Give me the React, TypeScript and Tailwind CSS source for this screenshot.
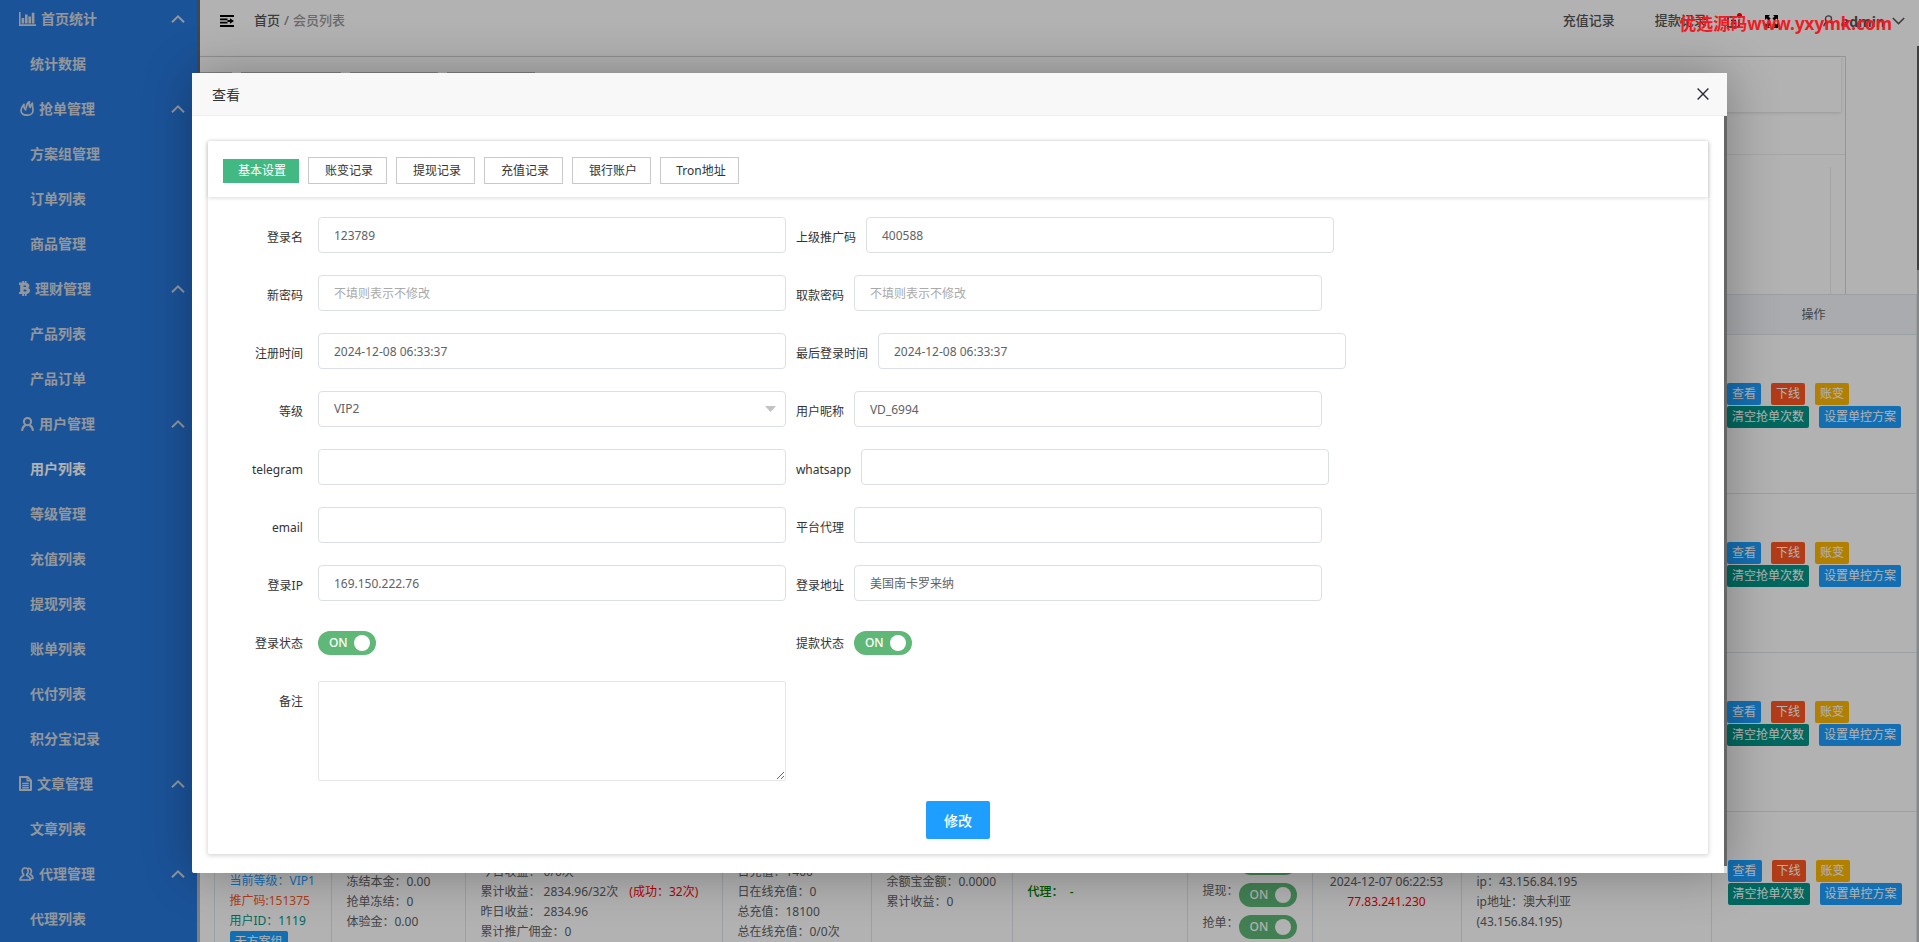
import React from 'react';

type IconName = 'chart' | 'fire' | 'coin' | 'user' | 'doc' | 'agent';
type MenuGroup = { title: string; icon: IconName; items: string[]; active?: string };

const MENU: MenuGroup[] = [
  { title: '首页统计', icon: 'chart', items: ['统计数据'] },
  { title: '抢单管理', icon: 'fire', items: ['方案组管理', '订单列表', '商品管理'] },
  { title: '理财管理', icon: 'coin', items: ['产品列表', '产品订单'] },
  {
    title: '用户管理',
    icon: 'user',
    items: ['用户列表', '等级管理', '充值列表', '提现列表', '账单列表', '代付列表', '积分宝记录'],
    active: '用户列表',
  },
  { title: '文章管理', icon: 'doc', items: ['文章列表'] },
  { title: '代理管理', icon: 'agent', items: ['代理列表'] },
];

function MenuIcon({ name }: { name: IconName }) {
  if (name === 'chart') {
    return (
      <svg className="mr-[5px] h-[14px] w-[17px]" viewBox="0 0 17 14" fill="currentColor" aria-hidden="true">
        <path d="M0 0h1.6v12.2H17V14H0z" />
        <path d="M2.600 6h2.600v5.400H2.600zM6 2.600h2.600v8.800H6zM9.400 4.600H12v6.800H9.400zM12.800 .8h2.600v10.600h-2.600z" />
      </svg>
    );
  }
  if (name === 'fire') {
    return (
      <svg className="mr-[5px] ml-px h-[15px] w-[14px]" viewBox="0 0 14 15" fill="none" stroke="currentColor" strokeWidth="1.700" strokeLinejoin="round" aria-hidden="true">
        <path d="M4 3.400C2.200 5.400 1 7.400 1 9.600c0 2.800 2.600 4.600 6 4.600s6-1.800 6-4.800c0-2.200-.8-4-.6-7.200-1.400 1-2 2.400-2.200 4.200C9.200 5.200 8.800 3 9.400.8 7.200 2 6.400 4 6.200 6.600c-.4.600-.6 1.400-.6 2.200C4.200 7.400 3.600 5.400 4 3.400z" />
      </svg>
    );
  }
  if (name === 'coin') {
    return (
      <svg className="mr-[5px] h-[15px] w-[11px]" viewBox="0 0 11 15" fill="currentColor" fillRule="evenodd" aria-hidden="true">
        <path d="M3.200 0h1.800v1.600h.8V0h1.800v1.900c1.600.3 2.800 1.200 2.800 2.800 0 1-.4 1.700-1.200 2.200 1.200.4 1.800 1.400 1.800 2.700 0 2.100-1.400 3.200-3.400 3.400V15H5.800v-1.900H5V15H3.200v-1.900H0v-2.200h1.200V4.100H0V1.600h3.200zM4.600 4.400v1.700h1.400c.7 0 1.100-.3 1.100-.9s-.4-.8-1.100-.8zm0 4v2h1.600c.9 0 1.300-.4 1.300-1s-.4-1-1.300-1z" />
      </svg>
    );
  }
  if (name === 'user') {
    return (
      <svg className="mr-[5px] ml-[2px] h-[14px] w-[13px]" viewBox="0 0 13 14" fill="none" stroke="currentColor" strokeWidth="2" aria-hidden="true">
        <circle cx="6.500" cy="4.600" r="3.600" />
        <path d="M4.600 8C2.600 9 1.300 10.800 1 13.800M8.400 8c2 1 3.300 2.800 3.600 5.800" />
      </svg>
    );
  }
  if (name === 'doc') {
    return (
      <svg className="mr-[5px] h-[15px] w-[13px]" viewBox="0 0 13 15" fill="none" stroke="currentColor" strokeWidth="2" aria-hidden="true">
        <path d="M1 1h7.600L12 4.400V14H1z" strokeLinejoin="round" />
        <path d="M8.200 1v3.800H12M3.200 7.500h6.600M3.200 9.600h6.600M3.200 11.700h6.600" strokeWidth="1.400" />
      </svg>
    );
  }
  return (
    <svg className="mr-[5px] h-[14px] w-[15px]" viewBox="0 0 15 14" fill="none" stroke="currentColor" strokeWidth="1.600" strokeLinejoin="round" aria-hidden="true">
      <path d="M6.200 1c-1.900 0-3 1.400-3 3.200 0 1.500.6 2.700 1.500 3.300v.9C3 9.200 1 10 1 13h10.400c0-3-2-3.800-3.700-4.600v-.9c.9-.6 1.500-1.800 1.500-3.300C9.200 2.400 8.100 1 6.200 1z" />
      <path d="M9 1.200c2 0 3.400 1.200 3.400 3 0 1.400-.6 2.400-1.400 3 1.800.8 3 2 3 4.300h-2.400" />
    </svg>
  );
}

function Sidebar() {
  return (
    <aside className="flex h-full w-[200px] shrink-0 overflow-hidden">
      <nav className="-mt-1 flex-1 bg-[#2878dc] text-[14px] font-bold text-[#d3d8e0]">
        {MENU.map((group) => (
          <div key={group.title}>
            <button type="button" className="flex h-[45px] w-full items-center pr-3 pl-[19px] text-left">
              <MenuIcon name={group.icon} />
              <span className="flex-1">{group.title}</span>
              <svg className="h-2 w-[14px]" viewBox="0 0 14 8" fill="none" stroke="currentColor" strokeWidth="2" aria-hidden="true">
                <path d="M1 7.200 7 1.400l6 5.800" />
              </svg>
            </button>
            <ul>
              {group.items.map((item) => (
                <li key={item}>
                  <a
                    href="#"
                    className={
                      item === group.active
                        ? 'flex h-[45px] items-center pl-[30px] text-white'
                        : 'flex h-[45px] items-center pl-[30px]'
                    }
                  >
                    {item}
                  </a>
                </li>
              ))}
            </ul>
          </div>
        ))}
      </nav>
      <div className="w-[3px] bg-[#b8b8b8]">
        <div className="h-4/5 bg-[#666]" />
      </div>
    </aside>
  );
}

function TopBar() {
  return (
    <header className="flex h-[46px] items-center justify-between pr-[14px] pb-[4px] pl-5 text-[13px] text-[#555]">
      <div className="flex items-center font-medium">
        <button type="button" aria-label="收起菜单" className="mr-5 text-black">
          <svg className="h-3 w-[14px]" viewBox="0 0 14 12" fill="none" stroke="currentColor" strokeWidth="1.800" aria-hidden="true">
            <path d="M0 1h14M0 11h14M0 4.400h7.500M0 7.600h7.500M7.500 6h4" />
            <path d="m10 3.200 4 2.800-4 2.800z" fill="currentColor" stroke="none" />
          </svg>
        </button>
        <a href="#">首页</a>
        <span className="mx-1 text-[#888]">/</span>
        <a href="#" className="text-[#999]">会员列表</a>
      </div>
      <div className="flex items-center font-medium">
        <a href="#" className="mr-10">充值记录</a>
        <a href="#" className="mr-5">提款记录</a>
        <button type="button" aria-label="通知" className="relative mr-6 text-[#333]">
          <svg className="h-[14px] w-[14px]" viewBox="0 0 14 14" fill="none" stroke="currentColor" strokeWidth="1.600" aria-hidden="true">
            <path d="M1 3h9M1 3v10h11V6M4 6.500h5M4 9.500h5" />
          </svg>
          <span className="absolute -top-px -right-px h-[5px] w-[5px] rounded-full bg-[#ff0000]" />
        </button>
        <button type="button" aria-label="全屏" className="mr-[45px] text-black">
          <svg className="h-[13px] w-[13px]" viewBox="0 0 13 13" fill="currentColor" aria-hidden="true">
            <path d="M0 0h5L3.500 1.500 5.600 3.600 3.600 5.600 1.500 3.500 0 5zM13 0v5l-1.500-1.500-2.100 2.100-2-2 2.100-2.100L8 0zM0 13V8l1.500 1.500 2.100-2.100 2 2-2.100 2.100L5 13zM13 13H8l1.500-1.500-2.100-2.100 2-2 2.100 2.100L13 8z" />
          </svg>
        </button>
        <button type="button" className="flex items-center text-[14px] font-bold">
          <svg className="mr-[7px] h-[14px] w-[11px]" viewBox="0 0 13 14" fill="none" stroke="currentColor" strokeWidth="1.600" aria-hidden="true">
            <circle cx="6.500" cy="4.600" r="3.600" />
            <path d="M4.600 8C2.400 9 1.200 10.800 1 13.200M8.400 8c2.200 1 3.400 2.800 3.600 5.200" />
          </svg>
          admin
          <svg className="ml-[7px] h-2 w-[13px]" viewBox="0 0 13 8" fill="none" stroke="currentColor" strokeWidth="1.500" aria-hidden="true">
            <path d="m.8 1 5.700 5.600L12.200 1" />
          </svg>
        </button>
      </div>
    </header>
  );
}

function Switch({ id, label }: { id: string; label: string }) {
  return (
    <label htmlFor={id} className="flex h-6 w-[58px] items-center justify-between rounded-full bg-[#5fb878] pr-[6px] pl-[11px] text-[12px] leading-6 font-medium text-white">
      <input id={id} type="checkbox" defaultChecked aria-label={label} className="sr-only" />
      <span>ON</span>
      <span className="h-4 w-4 rounded-full bg-white" />
    </label>
  );
}

function RowActions() {
  const base = 'h-[22px] rounded-[2px] px-[5px] text-[12px] leading-[22px] whitespace-nowrap text-white';
  return (
    <div className="flex flex-col gap-px">
      <div className="flex gap-[10px]">
        <button type="button" className={`${base} bg-[#1e9fff]`}>查看</button>
        <button type="button" className={`${base} bg-[#ff5722]`}>下线</button>
        <button type="button" className={`${base} bg-[#ffb800]`}>账变</button>
      </div>
      <div className="flex gap-[10px]">
        <button type="button" className={`${base} bg-[#009688]`}>清空抢单次数</button>
        <button type="button" className={`${base} bg-[#1e9fff]`}>设置单控方案</button>
      </div>
    </div>
  );
}

function Lines({ rows }: { rows: React.ReactNode[] }) {
  return (
    <div>
      {rows.map((row, i) => (
        <div key={i} className="h-5 whitespace-nowrap">
          {row}
        </div>
      ))}
    </div>
  );
}

function LastRowCells() {
  const cell = 'border-r border-[#dfe6ec] px-[15px] pt-[2px] align-middle';
  return (
    <>
      <td className={cell} />
      <td className={cell}>
        <Lines
          rows={[
            '',
            '',
            <span className="text-[#1e9fff]">当前等级：VIP1</span>,
            <span className="text-[#ff5722]">推广码:151375</span>,
            <span className="text-[#009688]">用户ID：1119</span>,
          ]}
        />
        <button type="button" className="block h-[22px] rounded-[2px] bg-[#1e9fff] px-[5px] leading-[22px] text-white">无方案组</button>
      </td>
      <td className={cell}>
        <Lines rows={['', '冻结本金：0.00', '抢单冻结：0', '体验金：0.00']} />
      </td>
      <td className={cell}>
        <Lines
          rows={[
            '',
            '今日收益： 0/0次',
            <>
              累计收益： 2834.96/32次 <span className="ml-2 text-[#ff0000]">(成功：32次)</span>
            </>,
            '昨日收益： 2834.96',
            '累计推广佣金：0',
          ]}
        />
      </td>
      <td className={cell}>
        <Lines rows={['', '日充值：1400', '日在线充值：0', '总充值：18100', '总在线充值：0/0次']} />
      </td>
      <td className={cell}>
        <Lines rows={['余额宝金额：0.0000', '累计收益：0']} />
      </td>
      <td className={`${cell} font-medium text-[#008000]`}>代理：&nbsp; -</td>
      <td className={cell}>
        <div className="flex flex-col gap-2 pt-[6px]">
          {['登录', '提现', '抢单'].map((name) => (
            <div key={name} className="flex">
              <span className="w-9 leading-4 whitespace-nowrap">{name}：</span>
              <Switch id={`row-${name}`} label={name} />
            </div>
          ))}
        </div>
      </td>
      <td className={`${cell} text-center`}>
        <Lines rows={['2024-12-07 06:22:53', <span className="text-[#ff0000]">77.83.241.230</span>]} />
      </td>
      <td className={cell}>
        <Lines rows={['', 'ip：43.156.84.195', 'ip地址：澳大利亚', '(43.156.84.195)']} />
      </td>
    </>
  );
}

function MemberPage() {
  return (
    <main className="pt-[10px]">
      <div className="mr-[71px] h-[238px] border-t border-r border-[#d6d6d6]">
        <div className="mr-1 flex h-[55px] gap-[9px] pt-[15px] shadow-[0_1px_3px_rgba(0,0,0,0.15)]">
          <div className="h-6 w-8 border-t border-[#bbb]" />
          <div className="h-6 w-[100px] border-t border-[#bbb]" />
          <div className="h-6 w-[88px] border-t border-[#bbb]" />
          <div className="h-6 w-[88px] border-t border-[#bbb]" />
        </div>
        <div className="h-[43px] border-b border-[#ececec]" />
        <div className="mt-3 mr-[14px] h-[127px] border-r border-[#ececec]" />
      </div>
      <table className="w-full table-fixed border-collapse text-[12px] leading-5 text-[#606266]">
        <colgroup>
          <col className="w-[14px]" />
          <col className="w-[117px]" />
          <col className="w-[134px]" />
          <col className="w-[257px]" />
          <col className="w-[149px]" />
          <col className="w-[141px]" />
          <col className="w-[175px]" />
          <col className="w-[125px]" />
          <col className="w-[149px]" />
          <col className="w-[250px]" />
          <col />
        </colgroup>
        <thead>
          <tr className="h-10 border-y border-[#dfe6ec] bg-[#f2f5fa]">
            <th colSpan={10} />
            <th className="border-r border-[#dfe6ec] font-normal">操作</th>
          </tr>
        </thead>
        <tbody>
          {[0, 1, 2].map((n) => (
            <tr key={n} className="h-[159px] border-b border-[#dfe6ec]">
              <td colSpan={10} />
              <td className="border-r border-[#dfe6ec] pt-[48px] pl-4 align-top">
                <RowActions />
              </td>
            </tr>
          ))}
          <tr className="h-[159px] border-b border-[#dfe6ec]">
            <LastRowCells />
            <td className="border-r border-[#dfe6ec] pt-[48px] pl-4 align-top">
              <RowActions />
            </td>
          </tr>
        </tbody>
      </table>
    </main>
  );
}

type Field = { id: string; label: string; value?: string; placeholder?: string; type?: 'select' };

const FIELD_ROWS: [Field, Field][] = [
  [
    { id: 'login', label: '登录名', value: '123789' },
    { id: 'parent', label: '上级推广码', value: '400588' },
  ],
  [
    { id: 'password', label: '新密码', placeholder: '不填则表示不修改' },
    { id: 'paypwd', label: '取款密码', placeholder: '不填则表示不修改' },
  ],
  [
    { id: 'created', label: '注册时间', value: '2024-12-08 06:33:37' },
    { id: 'lastlogin', label: '最后登录时间', value: '2024-12-08 06:33:37' },
  ],
  [
    { id: 'level', label: '等级', value: 'VIP2', type: 'select' },
    { id: 'nickname', label: '用户昵称', value: 'VD_6994' },
  ],
  [
    { id: 'telegram', label: 'telegram' },
    { id: 'whatsapp', label: 'whatsapp' },
  ],
  [
    { id: 'email', label: 'email' },
    { id: 'agent', label: '平台代理' },
  ],
  [
    { id: 'ip', label: '登录IP', value: '169.150.222.76' },
    { id: 'address', label: '登录地址', value: '美国南卡罗来纳' },
  ],
];

const LEFT_LABEL = 'w-[110px] shrink-0 pt-[11px] pr-[15px] text-right leading-5';
const RIGHT_LABEL = 'mx-[10px] shrink-0 pt-[11px] leading-5';
const CONTROL =
  'h-9 w-full rounded-[4px] border border-[#dcdfe6] bg-white px-[15px] text-[12px] text-[#606266] placeholder:text-[#aaa]';

function Control({ field }: { field: Field }) {
  if (field.type === 'select') {
    return (
      <div className="relative w-[468px]">
        <select id={field.id} defaultValue={field.value} className={`${CONTROL} appearance-none`}>
          <option>{field.value}</option>
        </select>
        <svg className="pointer-events-none absolute top-[15px] right-[10px] h-[6px] w-[11px]" viewBox="0 0 11 6" fill="#c2c2c2" aria-hidden="true">
          <path d="M0 0h11L5.500 6z" />
        </svg>
      </div>
    );
  }
  return (
    <div className="w-[468px]">
      <input id={field.id} type="text" defaultValue={field.value} placeholder={field.placeholder} className={CONTROL} />
    </div>
  );
}

const TABS = ['基本设置', '账变记录', '提现记录', '充值记录', '银行账户', 'Tron地址'];

function MemberDialog() {
  return (
    <section role="dialog" aria-labelledby="dialog-title" className="w-4/5 rounded-[2px] bg-white shadow-[1px_1px_50px_rgba(0,0,0,0.3)]">
      <header className="flex h-[43px] items-center justify-between border-b border-[#eee] bg-[#f8f8f8] pr-[18px] pl-5">
        <h2 id="dialog-title" className="text-[14px] text-[#333]">查看</h2>
        <button type="button" aria-label="关闭" className="text-[#2e2d3c]">
          <svg className="h-3 w-3" viewBox="0 0 12 12" fill="none" stroke="currentColor" strokeWidth="1.400" aria-hidden="true">
            <path d="m.6.6 10.800 10.800M11.400.6.6 11.400" />
          </svg>
        </button>
      </header>
      <div className="flex">
        <div className="flex-1 px-4 pt-[25px] pb-[19px]">
          <div className="rounded-[2px] shadow-[0_1px_4px_1px_rgba(0,0,0,0.15)]">
            <div className="flex h-14 items-center gap-[9px] pt-[3px] pl-[15px] text-[12px] text-[#333] shadow-[0_1px_4px_rgba(0,0,0,0.15)]">
              {TABS.map((tab, i) => (
                <button
                  key={tab}
                  type="button"
                  className={
                    i === 0
                      ? 'h-6 w-[76px] bg-[#42b983] pl-[2px] text-white'
                      : 'h-[27px] w-[79px] border border-[#c9c9c9] bg-white pl-[3px]'
                  }
                >
                  {tab}
                </button>
              ))}
            </div>
            <form className="flex flex-col gap-[22px] pt-5 pb-[15px] text-[12px] text-[#333]">
              {FIELD_ROWS.map(([left, right]) => (
                <div key={left.id} className="flex h-9">
                  <label htmlFor={left.id} className={LEFT_LABEL}>{left.label}</label>
                  <Control field={left} />
                  <label htmlFor={right.id} className={RIGHT_LABEL}>{right.label}</label>
                  <Control field={right} />
                </div>
              ))}
              <div className="flex h-9">
                <span className={LEFT_LABEL}>登录状态</span>
                <div className="w-[468px] pt-2">
                  <Switch id="login-status" label="登录状态" />
                </div>
                <span className={RIGHT_LABEL}>提款状态</span>
                <div className="pt-2">
                  <Switch id="draw-status" label="提款状态" />
                </div>
              </div>
              <div className="flex">
                <label htmlFor="remark" className={LEFT_LABEL}>备注</label>
                <textarea id="remark" className="h-[100px] w-[468px] rounded-[2px] border border-[#e6e6e6] p-[10px]" />
              </div>
              <button type="button" className="-mt-[2px] h-[38px] w-16 self-center rounded-[2px] bg-[#1e9fff] text-[14px] font-medium text-white">
                修改
              </button>
            </form>
          </div>
        </div>
        <div className="flex w-[3px] flex-col bg-[#666]">
          <div className="flex-1" />
          <div className="h-[7px] bg-[#ddd]" />
        </div>
      </div>
    </section>
  );
}

export default function App() {
  return (
    <div className="relative h-screen overflow-hidden bg-white font-['Noto_Sans','Noto_Sans_CJK_SC',sans-serif]">
      <div className="flex h-full">
        <Sidebar />
        <div className="flex min-w-0 flex-1 flex-col">
          <TopBar />
          <div className="flex min-h-0 flex-1 overflow-hidden">
            <div className="min-w-0 flex-1">
              <MemberPage />
            </div>
            <div className="w-[2px] bg-[#c2c2c2]">
              <div className="h-1/4 bg-[#5c5c5c]" />
            </div>
          </div>
        </div>
      </div>
      <div className="absolute inset-0 flex items-start justify-center bg-black/30 pt-[73px]">
        <MemberDialog />
      </div>
      <div className="pointer-events-none absolute top-[12px] right-[27px] text-[17px] leading-6 font-bold text-[#ed1c24]">
        优选源码www.yxymk.com
      </div>
    </div>
  );
}
